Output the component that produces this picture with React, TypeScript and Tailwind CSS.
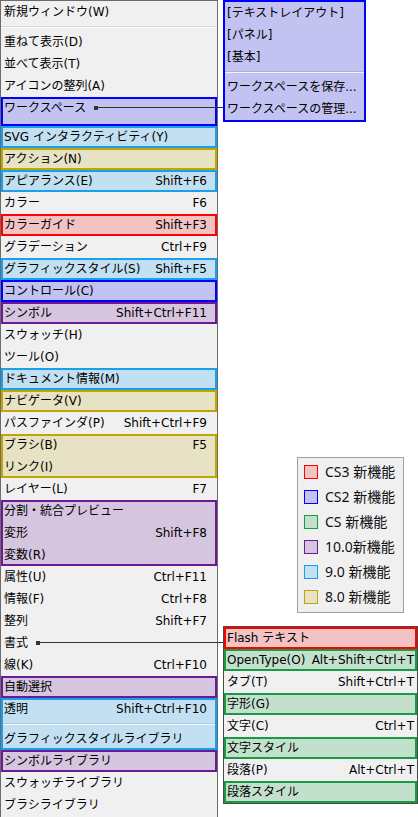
import React from 'react';

type Tone = 'cs3' | 'cs2' | 'cs' | 'v10' | 'v9' | 'v8';
type Entry = { label: string; keys?: string; dot?: boolean } | 'sep';
type Group = { tone?: Tone; items: Entry[]; pad?: boolean };

// box fill + inset 2px outline per version
const TONE: Record<Tone, string> = {
  cs3: 'bg-[#f2c3c3] shadow-[inset_0_0_0_2px_#ff0000]',
  cs2: 'bg-[#c3c3f2] shadow-[inset_0_0_0_2px_#0000ff]',
  cs: 'bg-[#c3e0cc] shadow-[inset_0_0_0_2px_#1a9a44]',
  v10: 'bg-[#d6c5de] shadow-[inset_0_0_0_2px_#6a1a94]',
  v9: 'bg-[#c3e0f2] shadow-[inset_0_0_0_2px_#18a0ee]',
  v8: 'bg-[#e6e2c3] shadow-[inset_0_0_0_2px_#bfa600]',
};

const SWATCH: Record<Tone, string> = {
  cs3: 'bg-[#f2c3c3] border-[#ff0000]',
  cs2: 'bg-[#c3c3f2] border-[#0000ff]',
  cs: 'bg-[#c3e0cc] border-[#1a9a44]',
  v10: 'bg-[#d6c5de] border-[#6a1a94]',
  v9: 'bg-[#c3e0f2] border-[#18a0ee]',
  v8: 'bg-[#e6e2c3] border-[#bfa600]',
};

const LEGEND: { tone: Tone; label: string }[] = [
  { tone: 'cs3', label: 'CS3 新機能' },
  { tone: 'cs2', label: 'CS2 新機能' },
  { tone: 'cs', label: 'CS 新機能' },
  { tone: 'v10', label: '10.0新機能' },
  { tone: 'v9', label: '9.0 新機能' },
  { tone: 'v8', label: '8.0 新機能' },
];

const MAIN: Group[] = [
  {
    items: [
      { label: '新規ウィンドウ(W)' },
      'sep',
      { label: '重ねて表示(D)' },
      { label: '並べて表示(T)' },
      { label: 'アイコンの整列(A)' },
    ],
  },
  { tone: 'cs2', items: [{ label: 'ワークスペース', dot: true }], pad: true },
  { tone: 'v9', items: [{ label: 'SVG インタラクティビティ(Y)' }] },
  { tone: 'v8', items: [{ label: 'アクション(N)' }] },
  { tone: 'v9', items: [{ label: 'アピアランス(E)', keys: 'Shift+F6' }] },
  { items: [{ label: 'カラー', keys: 'F6' }] },
  { tone: 'cs3', items: [{ label: 'カラーガイド', keys: 'Shift+F3' }] },
  { items: [{ label: 'グラデーション', keys: 'Ctrl+F9' }] },
  { tone: 'v9', items: [{ label: 'グラフィックスタイル(S)', keys: 'Shift+F5' }] },
  { tone: 'cs2', items: [{ label: 'コントロール(C)' }] },
  { tone: 'v10', items: [{ label: 'シンボル', keys: 'Shift+Ctrl+F11' }] },
  { items: [{ label: 'スウォッチ(H)' }, { label: 'ツール(O)' }] },
  { tone: 'v9', items: [{ label: 'ドキュメント情報(M)' }] },
  { tone: 'v8', items: [{ label: 'ナビゲータ(V)' }] },
  { items: [{ label: 'パスファインダ(P)', keys: 'Shift+Ctrl+F9' }] },
  { tone: 'v8', items: [{ label: 'ブラシ(B)', keys: 'F5' }, { label: 'リンク(I)' }] },
  { items: [{ label: 'レイヤー(L)', keys: 'F7' }] },
  {
    tone: 'v10',
    items: [{ label: '分割・統合プレビュー' }, { label: '変形', keys: 'Shift+F8' }, { label: '変数(R)' }],
  },
  {
    items: [
      { label: '属性(U)', keys: 'Ctrl+F11' },
      { label: '情報(F)', keys: 'Ctrl+F8' },
      { label: '整列', keys: 'Shift+F7' },
      { label: '書式', dot: true },
      { label: '線(K)', keys: 'Ctrl+F10' },
    ],
  },
  { tone: 'v10', items: [{ label: '自動選択' }] },
  {
    tone: 'v9',
    items: [{ label: '透明', keys: 'Shift+Ctrl+F10' }, 'sep', { label: 'グラフィックスタイルライブラリ' }],
  },
  { tone: 'v10', items: [{ label: 'シンボルライブラリ' }] },
  { items: [{ label: 'スウォッチライブラリ' }, { label: 'ブラシライブラリ' }] },
];

const TYPE_MENU: Group[] = [
  { tone: 'cs3', items: [{ label: 'Flash テキスト' }] },
  { tone: 'cs', items: [{ label: 'OpenType(O)', keys: 'Alt+Shift+Ctrl+T' }] },
  { items: [{ label: 'タブ(T)', keys: 'Shift+Ctrl+T' }] },
  { tone: 'cs', items: [{ label: '字形(G)' }] },
  { items: [{ label: '文字(C)', keys: 'Ctrl+T' }] },
  { tone: 'cs', items: [{ label: '文字スタイル' }] },
  { items: [{ label: '段落(P)', keys: 'Alt+Ctrl+T' }] },
  { tone: 'cs', items: [{ label: '段落スタイル' }] },
];

const WORKSPACE: Entry[] = [
  { label: '[テキストレイアウト]' },
  { label: '[パネル]' },
  { label: '[基本]' },
  'sep',
  { label: 'ワークスペースを保存...' },
  { label: 'ワークスペースの管理...' },
];

function Sep({ inset }: { inset?: boolean }) {
  return (
    <div className={`flex h-[8px] shrink-0 flex-col justify-center ${inset ? 'mx-[2px]' : ''}`}>
      <div className="h-px bg-black/10" />
      <div className="h-px bg-white/80" />
    </div>
  );
}

function Row({ entry, side }: { entry: Exclude<Entry, 'sep'>; side: string }) {
  return (
    <div className={`flex h-[22px] shrink-0 items-center justify-between whitespace-nowrap ${side}`}>
      <span className="flex items-center">
        {entry.label}
        {entry.dot && (
          <span className="relative ml-[8px] inline-block h-[4px] w-[4px] bg-[#333]">
            <span className="absolute left-full top-[1px] h-px w-[240px] bg-[#333]" />
          </span>
        )}
      </span>
      {entry.keys && <span>{entry.keys}</span>}
    </div>
  );
}

function Groups({ groups, side }: { groups: Group[]; side: string }) {
  return (
    <>
      {groups.map((g, gi) => (
        <div key={gi} className={`flex shrink-0 flex-col ${g.tone ? TONE[g.tone] : ''} ${g.pad ? 'pb-[7px]' : ''}`}>
          {g.items.map((it, i) =>
            it === 'sep' ? <Sep key={i} inset={!!g.tone} /> : <Row key={i} entry={it} side={side} />
          )}
        </div>
      ))}
    </>
  );
}

export default function App() {
  return (
    <div className="relative h-[817px] w-[418px] overflow-hidden bg-white font-['DejaVu_Sans','Noto_Sans_CJK_JP',sans-serif] text-[12px] text-black">
      {/* window menu */}
      <div className="flex h-[840px] w-[218px] flex-col border border-[#6b6b6b] bg-[#f0f0f0]">
        <Groups groups={MAIN} side="pl-[3px] pr-[10px]" />
      </div>

      {/* workspace submenu */}
      <div className="absolute left-[223px] top-0 z-10 flex w-[143px] flex-col border-2 border-[#0000ff] bg-[#c3c3f2]">
        {WORKSPACE.map((it, i) =>
          it === 'sep' ? <Sep key={i} /> : <Row key={i} entry={it} side="pl-[2px] pr-[2px]" />
        )}
      </div>

      {/* type submenu */}
      <div className="absolute left-[223px] top-[626px] z-10 flex w-[195px] flex-col border border-[#4a4a4a] bg-[#f0f0f0]">
        <Groups groups={TYPE_MENU} side="pl-[3px] pr-[3px]" />
      </div>

      {/* legend */}
      <div className="absolute left-[297px] top-[457px] z-10 flex w-[107px] flex-col border border-[#a0a0a0] bg-[#f0f0f0] pb-[3px] pl-[6px] pt-px font-['Noto_Sans','Noto_Sans_CJK_JP',sans-serif] text-[14px] text-[#111]">
        {LEGEND.map((l) => (
          <div key={l.tone} className="flex h-[25px] items-center gap-[7px]">
            <span className={`h-[14px] w-[14px] border ${SWATCH[l.tone]}`} />
            <span className="whitespace-nowrap">{l.label}</span>
          </div>
        ))}
      </div>
    </div>
  );
}
